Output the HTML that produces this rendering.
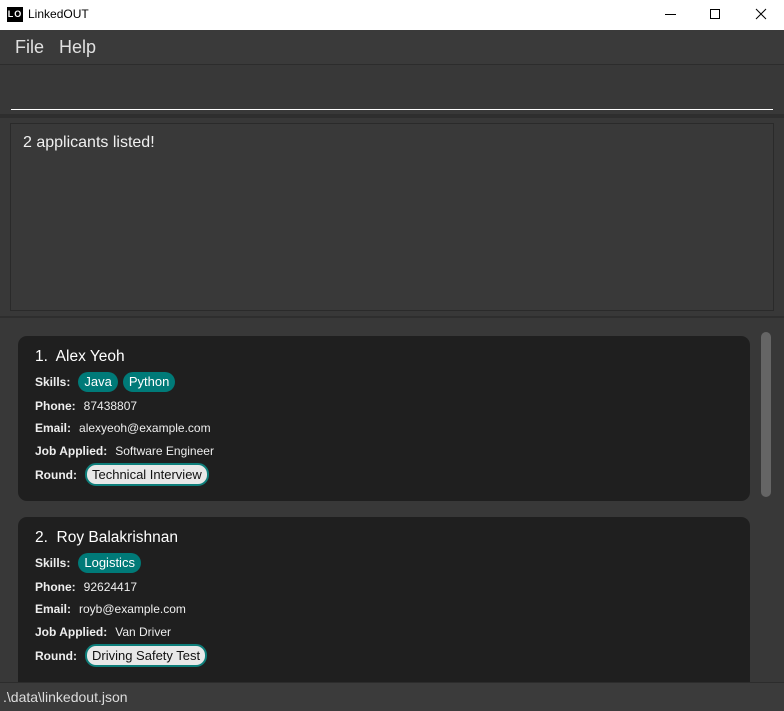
<!DOCTYPE html><html><head><style>
*{margin:0;padding:0;box-sizing:border-box}
body{width:784px;height:711px;position:relative;background:#383838;font-family:"Liberation Sans",sans-serif;overflow:hidden}
.a{position:absolute}
.title{left:0;top:0;width:784px;height:30px;background:#fff}
.menu{left:0;top:30px;width:784px;height:35px;background:#3a3a3a;border-bottom:1px solid #2c2c2c;color:#e0e0e0;font-size:18px}
.card{left:18px;width:732px;background:#1f1f1f;border-radius:9px;color:#fff}
.row{position:absolute;left:17px;font-size:12px;color:#eee;white-space:nowrap;height:20px;line-height:20px}
.row b{font-weight:bold;margin-right:8px}
.tag{display:inline-block;background:#007a78;color:#fff;border-radius:10px;padding:0 6px;height:20px;line-height:20px;margin-right:5px;font-size:13px}
.rd{display:inline-block;background:#e8e8e8;color:#111;border:2px solid #0e7e7a;border-radius:11px;padding:0 5px;height:23px;line-height:19px;margin-top:-2px;font-size:13px}
.nm{position:absolute;left:17px;font-size:15.5px;color:#fff}
</style></head><body>
<div class="a title">
<div class="a" style="left:7px;top:7px;width:16px;height:15px;background:#000;color:#fff;font-size:9px;font-weight:bold;line-height:15px;text-align:center;letter-spacing:1px">LO</div>
<div class="a" style="left:28px;top:7px;font-size:12px;color:#000">LinkedOUT</div>
<div class="a" style="left:665px;top:14px;width:11px;height:1px;background:#000"></div>
<div class="a" style="left:710px;top:9px;width:10px;height:10px;border:1px solid #000"></div>
<svg class="a" style="left:755px;top:8px" width="12" height="12"><path d="M1 1L11 11M11 1L1 11" stroke="#000" stroke-width="1"/></svg>
</div>
<div class="a menu"><span class="a" style="left:15px;top:7px">File</span><span class="a" style="left:59px;top:7px">Help</span></div>
<div class="a" style="left:0;top:66px;width:784px;height:52px;background:#383838;border-bottom:4px solid #2e2e2e"></div>
<div class="a" style="left:11px;top:109px;width:762px;height:1px;background:#fff"></div>
<div class="a" style="left:10px;top:123px;width:764px;height:188px;background:#393939;border:1px solid #2a2a2a"></div>
<div class="a" style="left:23px;top:134px;font-size:16px;color:#f0f0f0">2 applicants listed!</div>
<div class="a" style="left:0;top:316px;width:784px;height:2px;background:#2e2e2e"></div>
<div class="a" style="left:761px;top:332px;width:10px;height:165px;background:#656565;border-radius:5px"></div>
<div class="a card" style="top:336px;height:165px">
<div class="nm" style="top:12px">1.&nbsp; Alex Yeoh</div>
<div class="row" style="top:36px"><b>Skills:</b><span class="tag">Java</span><span class="tag">Python</span></div>
<div class="row" style="top:60px"><b>Phone:</b>87438807</div>
<div class="row" style="top:82px"><b>Email:</b>alexyeoh@example.com</div>
<div class="row" style="top:105px"><b>Job Applied:</b>Software Engineer</div>
<div class="row" style="top:129px"><b>Round:</b><span class="rd">Technical Interview</span></div>
</div>
<div class="a card" style="top:517px;height:180px">
<div class="nm" style="top:12px">2.&nbsp; Roy Balakrishnan</div>
<div class="row" style="top:36px"><b>Skills:</b><span class="tag">Logistics</span></div>
<div class="row" style="top:60px"><b>Phone:</b>92624417</div>
<div class="row" style="top:82px"><b>Email:</b>royb@example.com</div>
<div class="row" style="top:105px"><b>Job Applied:</b>Van Driver</div>
<div class="row" style="top:129px"><b>Round:</b><span class="rd">Driving Safety Test</span></div>
</div>
<div class="a" style="left:0;top:682px;width:784px;height:29px;background:#3b3b3b;border-top:1px solid #2c2c2c"></div>
<div class="a" style="left:3px;top:689px;font-size:14px;color:#ddd">.\data\linkedout.json</div>
</body></html>
